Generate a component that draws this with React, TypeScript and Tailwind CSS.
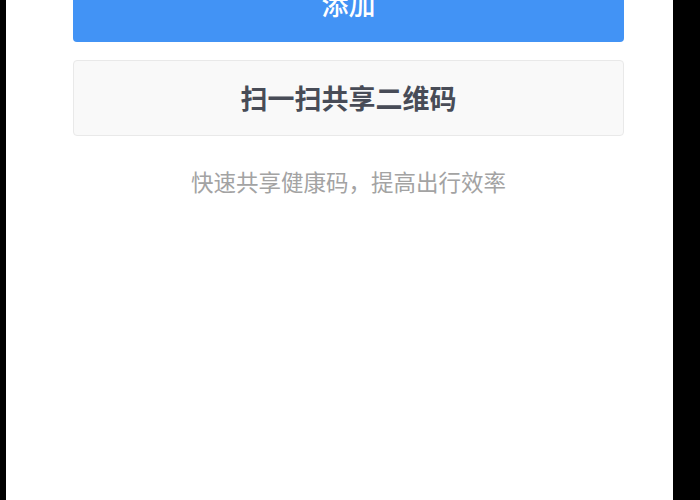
export default function App() {
  return (
    <div
      className="flex w-[700px] h-[500px] overflow-hidden bg-black"
      style={{ fontFamily: '"Noto Sans CJK SC", "Noto Sans", sans-serif' }}
    >
      <div className="w-[6px] bg-black" />
      <div className="flex-1 bg-white overflow-hidden">
        <div className="mt-[-34px] pl-[67px] pr-[49px] flex flex-col">
          {/* Primary action */}
          <button className="h-[76px] w-full rounded-[4px] bg-[#4293f5] text-white text-[27px] font-medium">
            添加
          </button>

          {/* Secondary action */}
          <button className="mt-[18px] h-[76px] w-full rounded-[4px] border border-[#e9e9e9] bg-[#f9f9f9] text-[#484c57] text-[27px] font-semibold">
            扫一扫共享二维码
          </button>

          <p className="mt-[30px] text-center text-[22.5px] leading-[30px] text-[#a3a3a3]">
            快速共享健康码，提高出行效率
          </p>
        </div>
      </div>
      <div className="w-[27px] bg-black" />
    </div>
  )
}
